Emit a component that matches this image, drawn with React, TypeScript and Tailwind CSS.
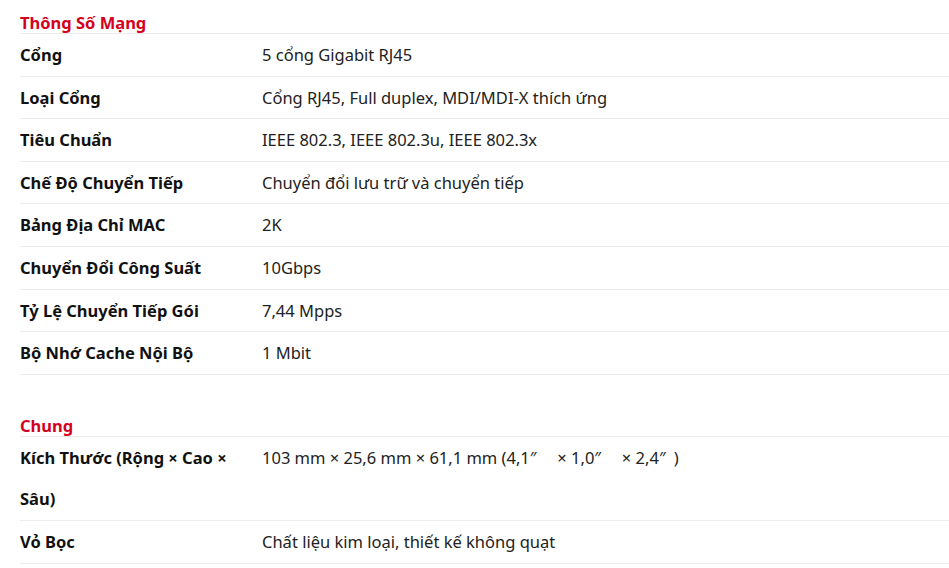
import React from "react";

type Row = { label: string; value: string };

const network: Row[] = [
  { label: "Cổng", value: "5 cổng Gigabit RJ45" },
  { label: "Loại Cổng", value: "Cổng RJ45, Full duplex, MDI/MDI-X thích ứng" },
  { label: "Tiêu Chuẩn", value: "IEEE 802.3, IEEE 802.3u, IEEE 802.3x" },
  { label: "Chế Độ Chuyển Tiếp", value: "Chuyển đổi lưu trữ và chuyển tiếp" },
  { label: "Bảng Địa Chỉ MAC", value: "2K" },
  { label: "Chuyển Đổi Công Suất", value: "10Gbps" },
  { label: "Tỷ Lệ Chuyển Tiếp Gói", value: "7,44 Mpps" },
  { label: "Bộ Nhớ Cache Nội Bộ", value: "1 Mbit" },
];

const general: Row[] = [
  {
    label: "Kích Thước (Rộng × Cao × Sâu)",
    value: "103 mm × 25,6 mm × 61,1 mm (4,1″\u2003 × 1,0″\u2003 × 2,4″\u2002)",
  },
  { label: "Vỏ Bọc", value: "Chất liệu kim loại, thiết kế không quạt" },
];

function Section({ title, rows, first }: { title: string; rows: Row[]; first?: boolean }) {
  return (
    <div className={first ? "pt-[12px]" : "pt-[40px]"}>
      <div className="h-[22px] leading-[22px] text-[16.5px] font-bold text-[#d6001c] border-b border-[#ececec]">
        {title}
      </div>
      {rows.map((r) => (
        <div key={r.label} className="flex border-b border-[#ececec] leading-[41.6px] text-[16.5px]">
          <div className="w-[242px] shrink-0 pr-[10px] font-bold text-[#111]">{r.label}</div>
          <div className="flex-1 text-[#222]">{r.value}</div>
        </div>
      ))}
    </div>
  );
}

export default function App() {
  return (
    <div
      className="w-[949px] h-[568px] bg-white pl-5 overflow-hidden"
      style={{ fontFamily: '"Noto Sans", "Open Sans", sans-serif' }}
    >
      <Section title="Thông Số Mạng" rows={network} first />
      <Section title="Chung" rows={general} />
    </div>
  );
}
